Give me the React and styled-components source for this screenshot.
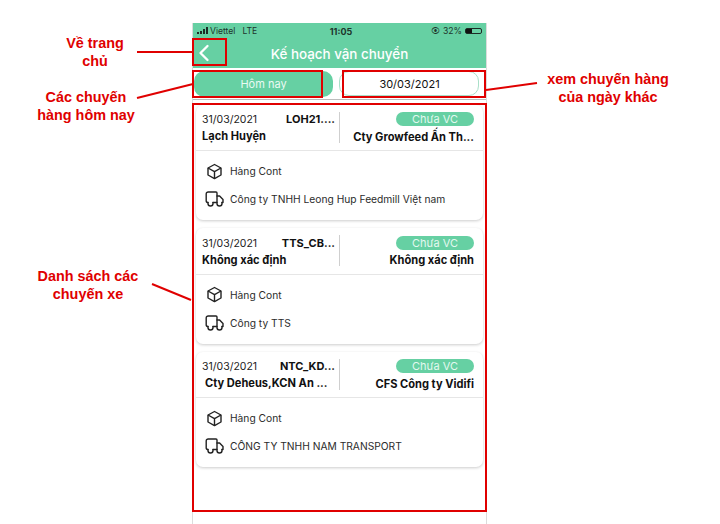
import styled, { createGlobalStyle } from "styled-components";
import { ChevronLeft } from "lucide-react";

const Global = createGlobalStyle`
  html, body {
    margin: 0;
    padding: 0;
    background: #fff;
  }
`;

const Page = styled.div`
  position: relative;
  width: 720px;
  height: 524px;
  overflow: hidden;
  background: #fff;
  font-family: Inter, "Liberation Sans", sans-serif;
`;

const Phone = styled.div`
  box-sizing: border-box;
  width: 295px;
  height: 501px;
  margin: 23px 0 0 192px;
  padding: 0 1px;
  background: #dcdcdc;
  display: flex;
`;

const Screen = styled.div`
  flex: 1;
  background: #fff;
  display: flex;
  flex-direction: column;
`;

const Head = styled.div`
  background: #66d0a3;
  height: 45px;
  display: flex;
  flex-direction: column;
`;

const StatusBar = styled.div`
  height: 16px;
  padding: 0 4px 0 4px;
  display: flex;
  align-items: center;
  font-size: 8.6px;
  color: #20352c;
`;

const StatusLeft = styled.div`
  flex: 1;
  display: flex;
  align-items: center;
  gap: 7px;
`;

const StatusTime = styled.div`
  font-weight: 700;
  font-size: 9px;
  padding-left: 3px;
`;

const StatusRight = styled.div`
  flex: 1;
  display: flex;
  justify-content: flex-end;
  align-items: center;
  gap: 3px;
`;

const Signal = styled.span`
  display: inline-flex;
  align-items: flex-end;
  gap: 1px;
  margin-right: 2px;
  height: 7px;
`;

const SignalBar = styled.i`
  width: 2px;
  height: ${({ h }) => h}px;
  background: #1d2b25;
`;

const Battery = styled.span`
  width: 17px;
  height: 6px;
  border: 1px solid #1d2b25;
  border-radius: 2px;
  box-sizing: border-box;
  display: flex;
`;

const BatteryFill = styled.i`
  width: 6px;
  background: #111;
`;

const TitleRow = styled.div`
  flex: 1;
  display: flex;
  align-items: center;
  position: relative;
  justify-content: center;
  color: #fff;
  font-size: 13.4px;
  font-weight: 500;
`;

const BackButton = styled.div`
  position: absolute;
  left: -3px;
  top: 0;
  display: flex;
`;

const Tabs = styled.div`
  height: 32px;
  box-sizing: border-box;
  display: flex;
  align-items: center;
  gap: 6px;
  padding: 0 7px 0 1px;
  border-bottom: 1px solid #bdbdbd;
`;

const TodayTab = styled.div`
  width: 139px;
  height: 26px;
  background: #66d0a3;
  border-radius: 10px;
  color: #eafaf3;
  font-size: 11px;
  display: flex;
  align-items: center;
  justify-content: center;
  box-sizing: border-box;
`;

const DateTab = styled.div`
  flex: 1;
  height: 25px;
  border: 1px solid #a9dfc8;
  border-radius: 10px;
  color: #111;
  font-size: 11px;
  padding: 1px 0 0 1px;
  box-sizing: border-box;
  display: flex;
  align-items: center;
  justify-content: center;
`;

const List = styled.div`
  padding: 4.5px 3px 0;
  display: flex;
  flex-direction: column;
  gap: 8px;
`;

const Card = styled.div`
  height: 115.5px;
  background: #fff;
  border-radius: 7px;
  box-shadow: 0 1px 3px rgba(0, 0, 0, 0.2);
  display: flex;
  flex-direction: column;
`;

const CardTop = styled.div`
  height: 46.5px;
  flex: none;
  box-sizing: border-box;
  border-bottom: 1px solid #e6e6e6;
  display: grid;
  grid-template-columns: 1fr 1px 143px;
  align-items: center;
`;

const TopLeft = styled.div`
  padding: 1px 4px 0 6px;
  display: flex;
  flex-direction: column;
  gap: 3px;
  min-width: 0;
`;

const MetaRow = styled.div`
  display: flex;
  justify-content: space-between;
  align-items: baseline;
  font-size: 10.5px;
  color: #222;
`;

const Code = styled.span`
  font-size: 11px;
  font-weight: 700;
  color: #111;
`;

const Place = styled.div`
  font-size: 11.1px;
  font-weight: 700;
  color: #111;
  white-space: nowrap;
  padding-left: ${({ indent }) => (indent ? 3 : 0)}px;
  text-align: ${({ align }) => align || "left"};
`;

const Rule = styled.div`
  height: 31px;
  background: #cfcfcf;
`;

const TopRight = styled.div`
  padding: 1px 9px 0 8px;
  display: flex;
  flex-direction: column;
  align-items: flex-end;
  gap: 3.5px;
`;

const StatusPill = styled.div`
  width: 78px;
  height: 14px;
  border-radius: 7px;
  background: #66d0a3;
  color: #e3f8ef;
  font-size: 11px;
  display: flex;
  align-items: center;
  justify-content: center;
`;

const CardBody = styled.div`
  padding: 11px 9px 0;
  display: flex;
  flex-direction: column;
  gap: 10px;
`;

const InfoRow = styled.div`
  height: 18px;
  display: flex;
  align-items: center;
  gap: 6px;
  font-size: 10.25px;
  color: #2b2b2b;
`;

const IconSlot = styled.span`
  width: 19px;
  display: flex;
  justify-content: center;
`;

const Callout = styled.div`
  position: absolute;
  left: ${({ x }) => x}px;
  top: ${({ y }) => y}px;
  width: ${({ w }) => w}px;
  height: ${({ h }) => h}px;
  box-sizing: border-box;
  border: 2px solid #e00000;
`;

const Note = styled.div`
  position: absolute;
  left: ${({ x }) => x}px;
  top: ${({ y }) => y}px;
  width: ${({ w }) => w}px;
  text-align: center;
  color: #e00000;
  font-family: "Liberation Sans", Arial, sans-serif;
  font-size: 14.4px;
  font-weight: 700;
  line-height: 17.5px;
`;

const Leaders = styled.svg`
  position: absolute;
  left: 0;
  top: 0;
  pointer-events: none;
`;

const BoxIcon = () => (
  <svg width="17" height="17" viewBox="0 0 17 17" fill="none" stroke="#222" strokeWidth="1.4" strokeLinejoin="round">
    <path d="M8.5 1.5 15 5v7l-6.5 3.6L2 12V5z" />
    <path d="M2 5l6.5 3.6L15 5M8.5 8.6v7" />
  </svg>
);

const TruckIcon = () => (
  <svg width="19" height="16" viewBox="0 0 19 16" fill="none" stroke="#222" strokeWidth="1.4" strokeLinejoin="round" strokeLinecap="round">
    <path d="M3 11.5C1.9 11.5 1.2 11 1.2 10V3a2 2 0 0 1 2-2H11a1 1 0 0 1 1 1v9.5H8" />
    <path d="M3 11.5v1a2.5 2.5 0 0 0 5 0v-1" />
    <path d="M12 5h2.6L18 8.6v2.9h-1" />
    <path d="M12 11.5v1a2.5 2.5 0 0 0 5 0v-1" />
  </svg>
);

const trips = [
  {
    code: "LOH21....",
    from: "Lạch Huyện",
    to: "Cty Growfeed Ấn Th...",
    carrier: "Công ty TNHH Leong Hup Feedmill Việt nam",
  },
  {
    code: "TTS_CB...",
    from: "Không xác định",
    to: "Không xác định",
    carrier: "Công ty TTS",
  },
  {
    code: "NTC_KD...",
    from: "Cty Deheus,KCN An ...",
    to: "CFS Công ty Vidifi",
    carrier: "CÔNG TY TNHH NAM TRANSPORT",
    indent: true,
  },
];

const App = () => (
  <Page>
    <Global />
    <Phone>
      <Screen>
        <Head>
          <StatusBar>
            <StatusLeft>
              <span>
                <Signal>
                  <SignalBar h={2} />
                  <SignalBar h={3} />
                  <SignalBar h={5} />
                  <SignalBar h={7} />
                </Signal>
                Viettel
              </span>
              <span>LTE</span>
            </StatusLeft>
            <StatusTime>11:05</StatusTime>
            <StatusRight>
              <span>⦿</span>
              <span>32%</span>
              <Battery>
                <BatteryFill />
              </Battery>
            </StatusRight>
          </StatusBar>
          <TitleRow>
            <BackButton>
              <ChevronLeft size={28} color="#fff" strokeWidth={2} />
            </BackButton>
            Kế hoạch vận chuyển
          </TitleRow>
        </Head>
        <Tabs>
          <TodayTab>Hôm nay</TodayTab>
          <DateTab>30/03/2021</DateTab>
        </Tabs>
        <List>
          {trips.map((trip) => (
            <Card key={trip.code}>
              <CardTop>
                <TopLeft>
                  <MetaRow>
                    <span>31/03/2021</span>
                    <Code>{trip.code}</Code>
                  </MetaRow>
                  <Place indent={trip.indent}>{trip.from}</Place>
                </TopLeft>
                <Rule />
                <TopRight>
                  <StatusPill>Chưa VC</StatusPill>
                  <Place align="right">{trip.to}</Place>
                </TopRight>
              </CardTop>
              <CardBody>
                <InfoRow>
                  <IconSlot>
                    <BoxIcon />
                  </IconSlot>
                  Hàng Cont
                </InfoRow>
                <InfoRow>
                  <IconSlot>
                    <TruckIcon />
                  </IconSlot>
                  {trip.carrier}
                </InfoRow>
              </CardBody>
            </Card>
          ))}
        </List>
      </Screen>
    </Phone>

    <Callout x={192} y={38} w={35} h={28} />
    <Callout x={192} y={70} w={131} h={28} />
    <Callout x={342} y={70} w={144} h={28} />
    <Callout x={192} y={103} w={295} h={409} />

    <Leaders width="720" height="524">
      <g stroke="#e00000" strokeWidth="2" fill="none">
        <path d="M137 52H193" />
        <path d="M137 98L193 84" />
        <path d="M486 90L537 83" />
        <path d="M152 284L191 300" />
      </g>
    </Leaders>

    <Note x={45} y={35} w={100}>Về trang<br />chủ</Note>
    <Note x={21} y={89} w={130}>Các chuyến<br />hàng hôm nay</Note>
    <Note x={542} y={71} w={132}>xem chuyến hàng<br />của ngày khác</Note>
    <Note x={20} y={268} w={136}>Danh sách các<br />chuyến xe</Note>
  </Page>
);

export default App;
